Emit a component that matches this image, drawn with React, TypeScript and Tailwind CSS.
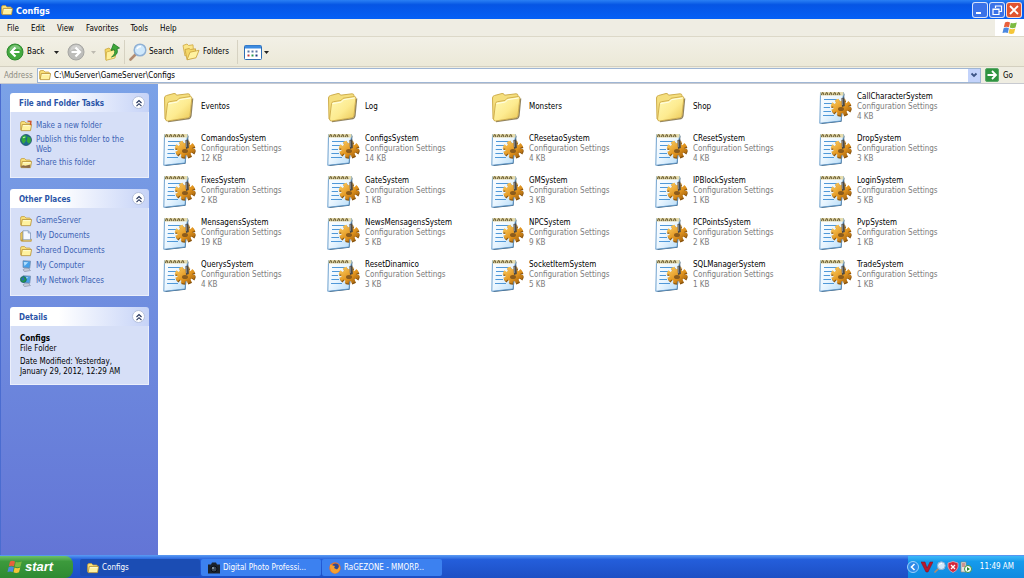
import type { ReactNode } from "react";

const FONT = "font-['DejaVu_Sans_Condensed','DejaVu_Sans',sans-serif]";

function Folder({ className }: { className: string }) {
  return (
    <svg viewBox="0 0 36 36" className={className} aria-hidden="true">
      <defs>
        <linearGradient id="folderFace" x1="0" y1="0" x2="1" y2="1">
          <stop offset="0" stopColor="#fffab8" />
          <stop offset=".55" stopColor="#fdeb90" />
          <stop offset="1" stopColor="#e9c552" />
        </linearGradient>
      </defs>
      <path d="M2 30 L1.500 9 Q1.500 7 3.500 6.500 L11 4.500 Q13 4.200 13.500 6.200 L25 4.800 Q27 4.800 27 6.500 L27 12 L5 31 Z" fill="#f5df7e" stroke="#cfae4e" strokeWidth="1" />
      <path d="M5 32.500 L26 29.500 Q27.500 29 27.800 27 L29.500 9.500" fill="none" stroke="#6b5a2c" strokeWidth="1.600" opacity=".75" />
      <path d="M4.500 14.500 Q4.700 13 6.500 12.700 L14 11.500 L16 9.300 L27.500 7.500 Q29 7.500 28.800 9.300 L27 26.500 Q26.700 28.500 25 28.800 L4.500 32 Q2.500 32 2.600 30 Z" fill="url(#folderFace)" stroke="#cda947" strokeWidth=".9" />
      <path d="M5.500 14.600 L14.500 13 L16.500 10.700 L27.500 9" stroke="#fffee6" strokeWidth="1" fill="none" />
    </svg>
  );
}

function SmallFolder({ className = "size-3", mark }: { className?: string; mark?: "new" | "share" }) {
  return (
    <svg viewBox="0 0 16 16" className={`shrink-0 ${className}`} aria-hidden="true">
      <path d="M.8 4 Q.8 2 2.800 2 H6 L8 4 H12.500 Q14 4 14 6 V13 H.8 Z" fill="#f8df78" stroke="#c49c3c" />
      <path d="M3 6 H15.500 L14 14.200 H1.500 Z" fill="#fff2a0" stroke="#b38c34" />
      <path d="M4 7.500 H14" stroke="#fffde2" />
      {mark === "new" && <path d="M10 1.500 L14.500 2 L14 7" stroke="#d0552a" strokeWidth="2" fill="none" />}
      {mark === "share" && <path d="M1 14 Q2 10 7 11.500 L14 10 L13 14.500 Z" fill="#8e6c48" />}
    </svg>
  );
}

function UpFolder() {
  return (
    <svg viewBox="0 0 16 18" className="h-[18px] w-4 shrink-0" aria-hidden="true">
      <path d="M1 6.500 L5 5 L6.500 6.500 L11 5.500 V14 L2 17 Z" fill="#f4d864" stroke="#c9a63e" strokeWidth=".8" />
      <path d="M2.500 9 L12 6.500 L11 15 L2 17.300 Z" fill="#fff09a" stroke="#d0ad44" strokeWidth=".8" />
      <path d="M7.500 14 Q12 11 10.300 6.500 L7 7.500 L9.500 .8 L15.500 5 L13 5.800 Q15 12 7.500 14 Z" fill="#3fa83a" stroke="#22782a" strokeWidth=".8" />
    </svg>
  );
}

function FoldersIcon() {
  return (
    <svg viewBox="0 0 18 18" className="size-[18px] shrink-0" aria-hidden="true">
      <path d="M1 2.500 L5 1 L6.500 2.500 L11 1.800 L11.500 9 L3 13 Z" fill="#fbe688" stroke="#d2af4c" strokeWidth=".9" />
      <path d="M3 6.500 L7 5.500 L8.500 6.500 L13.500 5.800 V14 L5 16.500 Z" fill="#f4d767" stroke="#cda642" strokeWidth=".9" />
      <path d="M8 9.200 L17 7.300 L14 14.800 L5 16.800 Z" fill="#fff2a0" stroke="#cda642" strokeWidth=".9" />
    </svg>
  );
}

function ConfigIcon() {
  return (
    <svg viewBox="0 0 36 36" className="size-9 shrink-0" aria-hidden="true">
      <defs>
        <linearGradient id="page" x1="0" y1="0" x2="1" y2="1">
          <stop offset="0" stopColor="#ffffff" />
          <stop offset=".5" stopColor="#eaf6ff" />
          <stop offset="1" stopColor="#b4dbf8" />
        </linearGradient>
        <linearGradient id="gear" x1="0" y1="0" x2="1" y2="1">
          <stop offset="0" stopColor="#f8c456" />
          <stop offset=".6" stopColor="#e0931e" />
          <stop offset="1" stopColor="#a8650e" />
        </linearGradient>
      </defs>
      <path d="M2 35 L22.500 32.800 L25.500 5 L24 3 Z" fill="#33546e" />
      <path d="M1.500 3.500 H24.500 L22 32 L.8 34.300 Z" fill="url(#page)" stroke="#5f96c8" strokeWidth=".9" />
      <path d="M1.500 3 H24.500 V6.500 H1.500 Z" fill="#e6dcae" />
      <path d="M2.500 6 q1.200 -5 2.400 0 m1.600 0 q1.200 -5 2.400 0 m1.600 0 q1.200 -5 2.400 0 m1.600 0 q1.200 -5 2.400 0 m1.600 0 q1.200 -5 2.400 0" stroke="#6f6238" strokeWidth="1.200" fill="none" />
      <path d="M5 10.500 H18 M5 14.500 H13 M4.700 18.500 H11 M4.400 22.500 H12 M4 26.500 H15" stroke="#4f98d8" strokeWidth="1.100" />
      <ellipse cx="22.500" cy="19.300" rx="8.300" ry="6.500" fill="none" stroke="#8a540c" strokeWidth="4" strokeDasharray="3.400 2.450" />
      <ellipse cx="22" cy="18" rx="8.300" ry="6.500" fill="none" stroke="url(#gear)" strokeWidth="4" strokeDasharray="3.400 2.450" />
      <ellipse cx="22" cy="18.300" rx="7.800" ry="6.200" fill="url(#gear)" />
      <ellipse cx="22" cy="20" rx="3" ry="2" fill="#8c5c1c" />
      <path d="M22.500 9 L25.500 8.500 L25.800 17 L23 18 Z" fill="#4b4a48" />
      <path d="M23.300 9.500 V16" stroke="#9aa0a8" strokeWidth=".8" />
    </svg>
  );
}

function Globe() {
  return (
    <svg viewBox="0 0 16 16" className="size-3 shrink-0" aria-hidden="true">
      <circle cx="8" cy="8" r="7.300" fill="#1d6a90" stroke="#174a60" />
      <path d="M3 3 Q7 0 9 3 L7 6 L8 9 L5 13 Q0 9 3 3 M10 3 L14 5 Q16 10 12 13 L9 10 Z" fill="#34a83c" />
      <path d="M4 5 L7 4" stroke="#b8f0b0" strokeWidth="1.500" />
    </svg>
  );
}

function DocsIcon() {
  return (
    <svg viewBox="0 0 16 16" className="size-3 shrink-0" aria-hidden="true">
      <path d="M1 4 L4 2 V14 H1 Z M3 12 H15 V15 H2 Z" fill="#efcf62" stroke="#b8923a" />
      <path d="M4 1 H11 L14 4 V13 H4 Z" fill="#f4f8ff" stroke="#7d95b8" />
      <path d="M11 1 V4 H14" fill="none" stroke="#7d95b8" />
    </svg>
  );
}

function ComputerIcon({ network }: { network?: boolean }) {
  return (
    <svg viewBox="0 0 16 16" className="size-3 shrink-0" aria-hidden="true">
      <path d="M4 1 L14 1.500 L13 11 L4 10 Z" fill="#46a0ea" stroke="#7088a8" />
      <path d="M5 2.500 L11 3 L6 8 Z" fill="#b4e0ff" />
      <path d="M7 11 H11 L14 14 L6 15.500 L4 13 Z" fill="#c4cad8" stroke="#7683a0" strokeWidth=".7" />
      {network && <circle cx="4.500" cy="6" r="4" fill="#239a48" stroke="#145c6c" />}
      {network && <path d="M2 4 L5 3 L6 6 L3 8 Z" fill="#2b66c0" />}
    </svg>
  );
}

function ArrowDisc({ dir, tone }: { dir: "left" | "right"; tone: "green" | "gray" }) {
  const green = tone === "green";
  return (
    <svg viewBox="0 0 18 18" className="size-[18px] shrink-0" aria-hidden="true">
      <circle cx="9" cy="9" r="8" fill={green ? "#43a83e" : "#bdbdba"} stroke={green ? "#2f8a30" : "#a6a6a3"} />
      <path d="M3 8 Q4 2 9 2 Q14 2 15 7 Q9 4 3 8" fill="#fff" opacity=".3" />
      <path
        d={dir === "left" ? "M9.500 4.500 L5 9 L9.500 13.500 M5.500 9 H13.500" : "M8.500 4.500 L13 9 L8.500 13.500 M12.500 9 H4.500"}
        stroke="#fff"
        strokeWidth="2.200"
        fill="none"
      />
    </svg>
  );
}

function Magnifier({ className }: { className: string }) {
  return (
    <svg viewBox="0 0 18 18" className={`shrink-0 ${className}`} aria-hidden="true">
      <path d="M7 11 L1.500 16.500" stroke="#b08a70" strokeWidth="2.600" strokeLinecap="round" />
      <circle cx="11" cy="7" r="5.800" fill="#cfe8fb" stroke="#8fb0d4" strokeWidth="1.500" />
      <path d="M8 6 Q9 3.500 12 3.500" stroke="#fff" strokeWidth="1.500" fill="none" />
    </svg>
  );
}

function WinFlag({ className }: { className: string }) {
  return (
    <svg viewBox="0 0 16 16" className={`shrink-0 ${className}`} aria-hidden="true">
      <path d="M3 2.500 Q5.500 1 8 2.500 L7 7.300 Q4.500 6 1.800 7.300 Z" fill="#e8603c" />
      <path d="M8.800 2.800 Q11.500 4 14.800 2.500 L13.500 7.500 Q10.500 8.800 7.800 7.500 Z" fill="#7dbb42" />
      <path d="M1.600 8.200 Q4.300 7 6.900 8.200 L5.800 13 Q3.300 11.800 .5 13 Z" fill="#4b88e0" />
      <path d="M7.600 8.500 Q10.300 9.800 13.300 8.400 L12 13.300 Q9.300 14.500 6.500 13.300 Z" fill="#f5c638" />
    </svg>
  );
}

function Caret({ muted }: { muted?: boolean }) {
  return (
    <svg viewBox="0 0 5 3" className="h-[3px] w-[5px] shrink-0" aria-hidden="true">
      <path d="M0 0 H5 L2.500 3 Z" fill={muted ? "#bdbab0" : "#222"} />
    </svg>
  );
}

function Panel({ title, children }: { title: string; children: ReactNode }) {
  return (
    <section>
      <header className="flex h-[19px] items-center justify-between rounded-t-[3px] bg-linear-to-r from-white from-35% to-[#c6d3f7] pr-1 pl-[9px]">
        <h2 className="pt-[3px] text-[8px] leading-[10px] font-bold text-[#2b55a8]">{title}</h2>
        <button type="button" aria-label={`Collapse ${title}`} className="flex size-[13px] items-center justify-center rounded-full border border-[#b4c0dc] bg-white">
          <svg viewBox="0 0 8 8" className="size-2" aria-hidden="true">
            <path d="M1.500 4 L4 1.500 L6.500 4 M1.500 7.200 L4 4.700 L6.500 7.200" fill="none" stroke="#24345c" strokeWidth="1.100" />
          </svg>
        </button>
      </header>
      <div className="border border-t-0 border-white/50 bg-[#d6dff7] text-[8px] leading-[10px]">{children}</div>
    </section>
  );
}

function TaskLink({ icon, children }: { icon: ReactNode; children: ReactNode }) {
  return (
    <li>
      <a href="#" className="flex items-start gap-1 text-[#3c63b4]">
        {icon}
        <span className="pt-px">{children}</span>
      </a>
    </li>
  );
}

const folders = ["Eventos", "Log", "Monsters", "Shop"];
const files: [string, number][] = [
  ["CallCharacterSystem", 4],
  ["ComandosSystem", 12],
  ["ConfigsSystem", 14],
  ["CResetaoSystem", 4],
  ["CResetSystem", 4],
  ["DropSystem", 3],
  ["FixesSystem", 2],
  ["GateSystem", 1],
  ["GMSystem", 3],
  ["IPBlockSystem", 1],
  ["LoginSystem", 5],
  ["MensagensSystem", 19],
  ["NewsMensagensSystem", 5],
  ["NPCSystem", 9],
  ["PCPointsSystem", 2],
  ["PvpSystem", 1],
  ["QuerysSystem", 4],
  ["ResetDinamico", 3],
  ["SocketItemSystem", 5],
  ["SQLManagerSystem", 1],
  ["TradeSystem", 1],
];

function TitleBar() {
  const button = "flex size-4 items-center justify-center rounded-[3px] border border-white/80";
  return (
    <header className="flex h-[19px] shrink-0 items-center bg-linear-to-b from-[#2a80f4] via-[#0655e4] via-25% to-[#0560f6] pr-0.5 pl-px">
      <SmallFolder />
      <h1 className="ml-[3px] flex-1 pt-0.5 text-[9px] leading-3 font-bold text-white">Configs</h1>
      <div className="flex gap-px">
        <button type="button" aria-label="Minimize" className={`${button} bg-[#3a72e8]`}>
          <svg viewBox="0 0 12 12" className="size-3"><path d="M2 9 H7" stroke="#fff" strokeWidth="2" /></svg>
        </button>
        <button type="button" aria-label="Restore" className={`${button} bg-[#3a72e8]`}>
          <svg viewBox="0 0 12 12" className="size-3"><path d="M4.500 4 V2 H10.500 V7.500 H8.500 M2 5 H8 V10.500 H2 Z M2 5.500 H8" fill="none" stroke="#fff" strokeWidth="1.200" /></svg>
        </button>
        <button type="button" aria-label="Close" className={`${button} bg-[#e0532f]`}>
          <svg viewBox="0 0 12 12" className="size-3"><path d="M2 2 L10 10 M10 2 L2 10" stroke="#fff" strokeWidth="1.800" /></svg>
        </button>
      </div>
    </header>
  );
}

function Toolbar() {
  return (
    <div className="flex h-[30px] shrink-0 items-center border-b border-[#d4d0c0] bg-linear-to-b from-[#f2f0e6] to-[#ece9d8] pt-px pl-1.5 text-[8px]">
      <button type="button" className="flex items-center gap-[3px]">
        <ArrowDisc dir="left" tone="green" />
        <span className="w-6 text-left">Back</span>
        <Caret />
      </button>
      <button type="button" aria-label="Forward" className="ml-2 flex items-center gap-1.5">
        <ArrowDisc dir="right" tone="gray" />
        <Caret muted />
      </button>
      <button type="button" aria-label="Up" className="ml-2">
        <UpFolder />
      </button>
      <span className="mx-1 h-6 w-px bg-[#d6d2c2]" />
      <button type="button" className="flex w-[53px] items-center gap-0.5">
        <Magnifier className="size-[18px]" />
        Search
      </button>
      <button type="button" className="flex w-[54px] items-center gap-[3px]">
        <FoldersIcon />
        Folders
      </button>
      <span className="mr-1.5 ml-px h-6 w-px bg-[#d6d2c2]" />
      <button type="button" aria-label="Views" className="flex items-center gap-0.5">
        <svg viewBox="0 0 18 15" className="h-[15px] w-[18px]" aria-hidden="true">
          <rect x=".5" y=".5" width="17" height="14" rx="1" fill="#fff" stroke="#2c6cb4" />
          <path d="M1 2 H17" stroke="#3d8be0" strokeWidth="3" />
          <path d="M3.500 6.500 H5.500 M7.500 6.500 H9.500 M11.500 6.500 H13.500" stroke="#5876a4" strokeWidth="2" />
          <path d="M3.500 10.500 H5.500" stroke="#c03c3c" strokeWidth="2" />
          <path d="M7.500 10.500 H9.500" stroke="#2b9a50" strokeWidth="2" />
          <path d="M11.500 10.500 H13.500" stroke="#1d3c80" strokeWidth="2" />
        </svg>
        <Caret />
      </button>
    </div>
  );
}

function AddressBar() {
  return (
    <form className="flex h-[17px] shrink-0 items-center border-b border-[#c8cad0] bg-[#efede2] pl-1 text-[8px]" onSubmit={(e) => e.preventDefault()}>
      <label htmlFor="address" className="w-[33px] pt-0.5 text-[#8c8a80]">Address</label>
      <div className="flex h-[15px] flex-1 items-center border border-[#9fb6d4] bg-white pl-px">
        <SmallFolder />
        <input id="address" defaultValue="C:\MuServer\GameServer\Configs" className="ml-[3px] min-w-0 flex-1 bg-transparent pt-0.5 outline-none" />
        <button type="button" aria-label="Show addresses" className="flex h-[13px] w-3 items-center justify-center bg-[#c3d3fb]">
          <svg viewBox="0 0 8 8" className="size-2" aria-hidden="true"><path d="M1.500 2.500 L4 5 L6.500 2.500" fill="none" stroke="#3c5484" strokeWidth="1.800" /></svg>
        </button>
      </div>
      <button type="submit" className="flex w-[43px] items-center gap-1 pl-1">
        <svg viewBox="0 0 14 14" className="size-3.5" aria-hidden="true">
          <rect x=".5" y=".5" width="13" height="13" rx="1.500" fill="#2f9440" stroke="#5aa868" />
          <path d="M2.500 7 H11 M7 3 L11 7 L7 11" stroke="#fff" strokeWidth="1.800" fill="none" />
        </svg>
        <span className="pt-0.5">Go</span>
      </button>
    </form>
  );
}

function Sidebar() {
  return (
    <aside className="ml-px flex w-[157px] shrink-0 flex-col gap-[11px] bg-linear-to-b from-[#7ba2e7] to-[#6375d6] px-[9px] py-[9px]">
      <Panel title="File and Folder Tasks">
        <ul className="flex flex-col gap-0.5 pt-2 pb-[8px] pl-[9px]">
          <TaskLink icon={<SmallFolder mark="new" />}>Make a new folder</TaskLink>
          <TaskLink icon={<Globe />}>Publish this folder to the<br />Web</TaskLink>
          <TaskLink icon={<SmallFolder mark="share" />}>Share this folder</TaskLink>
        </ul>
      </Panel>
      <Panel title="Other Places">
        <ul className="flex flex-col gap-[3px] pt-[7px] pb-2 pl-[9px]">
          <TaskLink icon={<SmallFolder />}>GameServer</TaskLink>
          <TaskLink icon={<DocsIcon />}>My Documents</TaskLink>
          <TaskLink icon={<SmallFolder />}>Shared Documents</TaskLink>
          <TaskLink icon={<ComputerIcon />}>My Computer</TaskLink>
          <TaskLink icon={<ComputerIcon network />}>My Network Places</TaskLink>
        </ul>
      </Panel>
      <Panel title="Details">
        <div className="pt-2 pb-[7px] pl-[9px]">
          <p className="font-bold">Configs</p>
          <p>File Folder</p>
          <p className="mt-[3px]">Date Modified: Yesterday,<br />January 29, 2012, 12:29 AM</p>
        </div>
      </Panel>
    </aside>
  );
}

function FileGrid() {
  const item = "flex h-[42px] w-full items-center gap-0.5 text-left text-[8px] leading-[10px]";
  return (
    <main className="flex-1 overflow-hidden bg-white pt-0.5 pl-[5px]">
      <ul className="grid grid-cols-[repeat(auto-fill,164px)]">
        {folders.map((name) => (
          <li key={name}>
            <button type="button" className={item}>
              <Folder className="size-9 shrink-0" />
              <span>{name}</span>
            </button>
          </li>
        ))}
        {files.map(([name, kb]) => (
          <li key={name}>
            <button type="button" className={item}>
              <ConfigIcon />
              <span className="text-[#7c7c7c]">
                <span className="block text-black">{name}</span>
                <span className="block">Configuration Settings</span>
                <span className="block">{kb} KB</span>
              </span>
            </button>
          </li>
        ))}
      </ul>
    </main>
  );
}

function Taskbar() {
  const task = "flex h-[17px] w-[120px] items-center gap-[3px] rounded-[2px] pl-[7px] text-white";
  return (
    <footer className="flex h-[23px] shrink-0 items-end bg-linear-to-b from-[#5c9cf4] via-[#245edb] via-20% to-[#1d4fc4] text-[8px]">
      <button type="button" className="mr-[7px] flex h-[22px] w-[73px] items-center gap-0.5 rounded-r-lg bg-linear-to-b from-[#6cc06a] via-[#3c9a3c] via-25% to-[#2f8a32] pl-[7px] font-['Liberation_Sans',sans-serif] text-[13px] font-bold text-white italic">
        <WinFlag className="size-4" />
        start
      </button>
      <div className="flex flex-1 items-center gap-px pb-[2px]">
        <button type="button" className={`${task} bg-[#1b4db4]`}>
          <SmallFolder />
          Configs
        </button>
        <button type="button" className={`${task} bg-[#3c81f0]`}>
          <svg viewBox="0 0 12 12" className="size-3 shrink-0" aria-hidden="true">
            <path d="M0 2.500 H3 L4 .5 H8 L9 2.500 H12 V11.500 H0 Z" fill="#1b222c" />
            <circle cx="6" cy="7" r="3" fill="#3a4654" stroke="#0a0e14" />
            <circle cx="5" cy="6" r="1" fill="#94a4b4" />
          </svg>
          Digital Photo Professi...
        </button>
        <button type="button" className={`${task} bg-[#3c81f0]`}>
          <svg viewBox="0 0 12 12" className="size-3 shrink-0" aria-hidden="true">
            <circle cx="6" cy="6" r="5.700" fill="#e8742a" />
            <circle cx="6.500" cy="4.800" r="3.300" fill="#2c4a94" />
            <path d="M1 2.500 L4 3.500 L6 4 L5 6 L8 7.500 L11 4 Q11.500 11 6 11.500 Q.5 11 1 2.500" fill="#f5a030" />
          </svg>
          RaGEZONE - MMORP...
        </button>
      </div>
      <div className="flex h-[22px] w-[116px] items-center bg-linear-to-b from-[#3cb8f8] via-[#159bec] via-25% to-[#118ae0] text-white">
        <button type="button" aria-label="Show hidden icons" className="-ml-px shrink-0">
          <svg viewBox="0 0 12 12" className="size-3" aria-hidden="true">
            <circle cx="6" cy="6" r="5.500" fill="#2f8be8" stroke="#9cd0fa" />
            <path d="M7.500 3 L4.500 6 L7.500 9" fill="none" stroke="#fff" strokeWidth="1.600" />
          </svg>
        </button>
        <div className="ml-0.5 flex flex-1 items-center gap-px">
          <svg viewBox="0 0 12 12" className="size-3" aria-hidden="true">
            <path d="M0 1 H4 L6 7 L9 1 H12 L7 11 H5 Z" fill="#b8182c" stroke="#7c1020" strokeWidth=".5" />
          </svg>
          <Magnifier className="size-3" />
          <svg viewBox="0 0 12 12" className="size-3" aria-hidden="true">
            <path d="M6 .5 L11 2 V6 Q10 10 6 11.500 Q2 10 1 6 V2 Z" fill="#d4283c" stroke="#f0b8c0" strokeWidth=".7" />
            <path d="M4 4 L8 8 M8 4 L4 8" stroke="#fff" strokeWidth="1.300" />
          </svg>
          <svg viewBox="0 0 12 12" className="size-3" aria-hidden="true">
            <path d="M1 1 H6 V11 H1 Z" fill="#e4e2dc" stroke="#8a8880" strokeWidth=".7" />
            <path d="M2 3 H5 M2 5 H5" stroke="#b04848" />
            <circle cx="8" cy="8" r="3.500" fill="#fff" stroke="#3c9440" />
            <path d="M7 6 L10 8 L7 10 Z" fill="#248a30" />
          </svg>
        </div>
        <time className="mr-2.5 whitespace-nowrap">11:49 AM</time>
      </div>
    </footer>
  );
}

export default function App() {
  return (
    <div className={`flex h-screen flex-col overflow-hidden bg-[#ece9d8] text-black ${FONT}`}>
      <TitleBar />
      <nav className="flex h-[18px] shrink-0 items-center border-b border-[#dcd8c8] bg-[#efede3] text-[8px]">
        <div className="flex flex-1 gap-3 pt-0.5 pl-[7px]">
          {["File", "Edit", "View", "Favorites", "Tools", "Help"].map((m) => (
            <button key={m} type="button">{m}</button>
          ))}
        </div>
        <div className="flex h-full w-[29px] items-center justify-center bg-white">
          <WinFlag className="size-4" />
        </div>
      </nav>
      <Toolbar />
      <AddressBar />
      <div className="flex min-h-0 flex-1 bg-[#4a6cd0]">
        <Sidebar />
        <FileGrid />
      </div>
      <Taskbar />
    </div>
  );
}
